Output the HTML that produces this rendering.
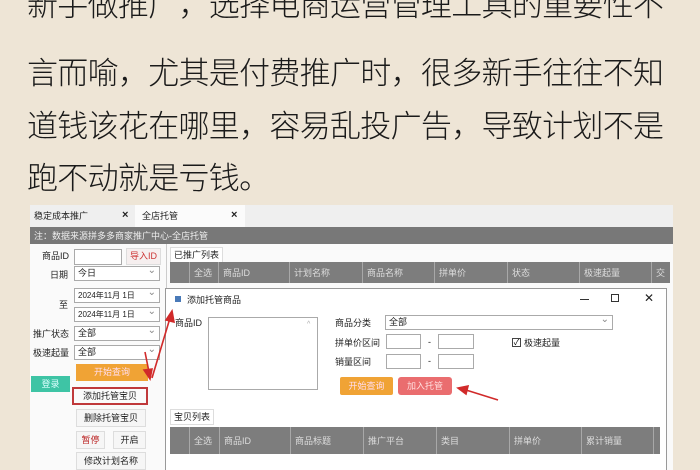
<!DOCTYPE html>
<html><head><meta charset="utf-8"><style>
*{margin:0;padding:0;box-sizing:border-box}
body{width:700px;height:470px;overflow:hidden;background:#eee5d6;font-family:"Liberation Sans","Noto Sans CJK SC",sans-serif;position:relative}
.t{position:absolute;left:27px;font-size:31px;font-weight:300;color:#1a1a1a;white-space:nowrap;letter-spacing:-0.7px;line-height:36px}
.a{position:absolute;font-size:9px;color:#222;white-space:nowrap;line-height:12px}
.box{position:absolute;border:1px solid #aaa;background:#fff}
.sel{position:absolute;border:1px solid #aaa;background:#fff;font-size:9px;line-height:13px;padding-left:3px;color:#222}
.sel:after{content:"⌄";position:absolute;right:3px;top:-3px;color:#888;font-size:10px}
.btn{position:absolute;font-size:9px;text-align:center;border:1px solid #ddd;background:#f6f6f6;color:#222}
.hdr{position:absolute;background:#7d7d7d;display:flex}
.hdr div{border-right:1px solid #a8a8a8;color:#ddd;font-size:9px;padding-left:4px;display:flex;align-items:center;height:100%}
</style></head><body>
<div class="t" style="top:-12px">新手做推广，选择电商运营管理工具的重要性不</div>
<div class="t" style="top:56px">言而喻，尤其是付费推广时，很多新手往往不知</div>
<div class="t" style="top:109px">道钱该花在哪里，容易乱投广告，导致计划不是</div>
<div class="t" style="top:161px">跑不动就是亏钱。</div>

<div style="position:absolute;left:30px;top:205px;width:643px;height:265px;background:#fafafa"></div>
<div style="position:absolute;left:30px;top:205px;width:643px;height:22px;background:#efefef"></div>
<div style="position:absolute;left:135px;top:205px;width:110px;height:22px;background:#fbfbfb"></div>
<div class="a" style="left:34px;top:210px">稳定成本推广</div>
<div class="a" style="left:122px;top:209px;font-size:11px;font-weight:bold">×</div>
<div class="a" style="left:142px;top:210px">全店托管</div>
<div class="a" style="left:231px;top:209px;font-size:11px;font-weight:bold">×</div>
<div style="position:absolute;left:30px;top:227px;width:643px;height:17px;background:#787878"></div>
<div class="a" style="left:34px;top:230px;color:#eee">注：数据来源拼多多商家推广中心-全店托管</div>

<div class="a" style="left:42px;top:250px">商品ID</div>
<div class="box" style="left:74px;top:249px;width:48px;height:16px"></div>
<div class="btn" style="left:126px;top:248px;width:35px;height:17px;color:#c33;line-height:15px;background:#f6efef">导入ID</div>
<div class="a" style="left:50px;top:269px">日期</div>
<div class="sel" style="left:74px;top:266px;width:86px;height:15px">今日</div>
<div class="a" style="left:59px;top:299px">至</div>
<div class="sel" style="left:74px;top:288px;width:86px;height:15px;font-size:8px">2024年11月 1日</div>
<div class="sel" style="left:74px;top:307px;width:86px;height:15px;font-size:8px">2024年11月 1日</div>
<div class="a" style="left:33px;top:328px">推广状态</div>
<div class="sel" style="left:74px;top:326px;width:86px;height:15px">全部</div>
<div class="a" style="left:33px;top:347px">极速起量</div>
<div class="sel" style="left:74px;top:345px;width:86px;height:15px">全部</div>
<div class="btn" style="left:76px;top:364px;width:72px;height:17px;background:#f0a335;border:none;color:#fde;line-height:17px">开始查询</div>
<div class="btn" style="left:31px;top:376px;width:39px;height:16px;background:#3ec4a5;border:none;color:#dff;line-height:16px">登录</div>
<div class="btn" style="left:72px;top:387px;width:76px;height:18px;border:2px solid #c0393b;line-height:14px;background:#fafafa">添加托管宝贝</div>
<div class="btn" style="left:76px;top:409px;width:70px;height:18px;line-height:16px">删除托管宝贝</div>
<div class="btn" style="left:76px;top:431px;width:29px;height:18px;line-height:16px;color:#b22">暂停</div>
<div class="btn" style="left:113px;top:431px;width:33px;height:18px;line-height:16px">开启</div>
<div class="btn" style="left:76px;top:452px;width:70px;height:18px;line-height:16px">修改计划名称</div>

<div style="position:absolute;left:166px;top:244px;width:1px;height:226px;background:#ccc"></div>
<div class="a" style="left:170px;top:247px;background:#fff;border:1px solid #ddd;padding:1px 3px">已推广列表</div>
<div class="hdr" style="left:170px;top:262px;width:500px;height:21px">
<div style="width:20px"></div><div style="width:29px">全选</div><div style="width:71px">商品ID</div><div style="width:73px">计划名称</div><div style="width:72px">商品名称</div><div style="width:73px">拼单价</div><div style="width:72px">状态</div><div style="width:72px">极速起量</div><div style="width:18px;border:none">交</div></div>

<div style="position:absolute;left:165px;top:288px;width:502px;height:182px;background:#fff;border:1px solid #999;border-bottom:none"></div>
<div style="position:absolute;left:175px;top:296px;width:6px;height:6px;background:#4a7ab8"></div>
<div class="a" style="left:187px;top:294px">添加托管商品</div>
<div style="position:absolute;left:580px;top:299px;width:9px;height:1px;background:#333"></div>
<div style="position:absolute;left:611px;top:294px;width:8px;height:8px;border:1px solid #333"></div>
<div class="a" style="left:644px;top:292px;font-size:12px">✕</div>
<div class="a" style="left:175px;top:317px">商品ID</div>
<div class="box" style="left:208px;top:317px;width:110px;height:73px"></div>
<div class="a" style="left:307px;top:319px;color:#aaa;font-size:7px">^</div>
<div class="a" style="left:335px;top:317px">商品分类</div>
<div class="sel" style="left:385px;top:315px;width:228px;height:15px">全部</div>
<div class="a" style="left:335px;top:337px">拼单价区间</div>
<div class="box" style="left:386px;top:334px;width:35px;height:15px"></div>
<div class="a" style="left:428px;top:336px">-</div>
<div class="box" style="left:438px;top:334px;width:36px;height:15px"></div>
<div class="a" style="left:335px;top:356px">销量区间</div>
<div class="box" style="left:386px;top:354px;width:35px;height:15px"></div>
<div class="a" style="left:428px;top:355px">-</div>
<div class="box" style="left:438px;top:354px;width:36px;height:15px"></div>
<div style="position:absolute;left:512px;top:338px;width:9px;height:9px;border:1px solid #444;font-size:8px;line-height:7px;text-align:center">✓</div>
<div class="a" style="left:524px;top:337px">极速起量</div>
<div class="btn" style="left:340px;top:377px;width:53px;height:18px;background:#f0a335;border:none;color:#fde;line-height:18px;border-radius:2px">开始查询</div>
<div class="btn" style="left:398px;top:377px;width:54px;height:18px;background:#ea6d6f;border:none;color:#fdd;line-height:18px;border-radius:3px">加入托管</div>
<div class="a" style="left:170px;top:409px;background:#fff;border:1px solid #ddd;padding:1px 3px">宝贝列表</div>
<div class="hdr" style="left:170px;top:427px;width:490px;height:27px">
<div style="width:20px"></div><div style="width:30px">全选</div><div style="width:71px">商品ID</div><div style="width:73px">商品标题</div><div style="width:73px">推广平台</div><div style="width:73px">类目</div><div style="width:72px">拼单价</div><div style="width:72px">累计销量</div><div style="width:6px;border:none"></div></div>

<svg style="position:absolute;left:0;top:0" width="700" height="470">
<g stroke="#d12a2a" stroke-width="1.6" fill="#d12a2a">
<line x1="145" y1="352" x2="149" y2="372"/><polygon points="144,370 152,369 150,379"/>
<line x1="152" y1="378" x2="170" y2="318"/><polygon points="166,320 174,322 172,311"/>
<line x1="498" y1="400" x2="466" y2="390"/><polygon points="468,386 466,394 458,388"/>
</g></svg>
</body></html>
